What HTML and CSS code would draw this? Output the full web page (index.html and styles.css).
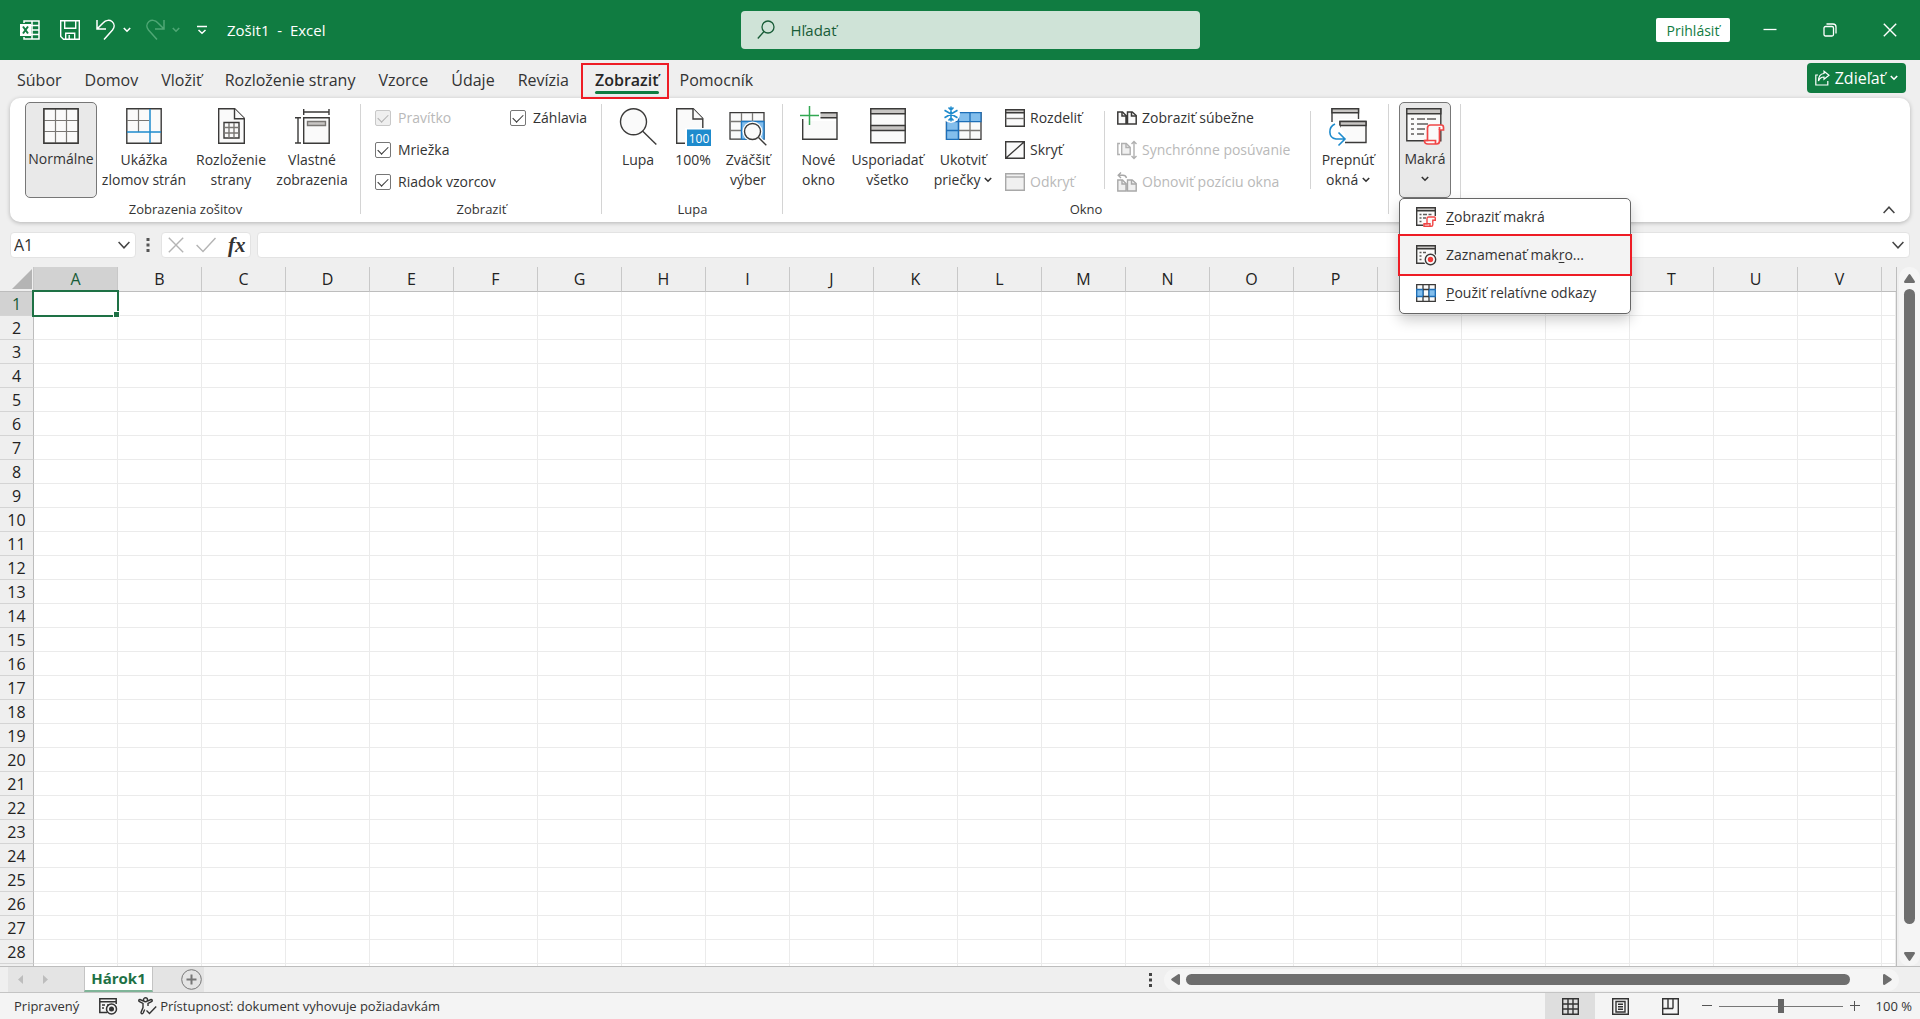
FILE: index.html
```
<!DOCTYPE html>
<html lang="sk">
<head>
    <meta charset="UTF-8">
    <meta name="viewport" content="width=device-width, initial-scale=1.0">
    <title>Zošit1 - Excel</title>
    <link rel="stylesheet" href="styles.css">
</head>
<body>
    <!-- Title bar -->
    <header class="titlebar">
        <div class="title-left">
            <svg class="app-icon" width="20" height="20" viewBox="0 0 20 20" fill="none" stroke="#fff" stroke-width="1.5">
                <path d="M4 3V1h15v18H4v-2M12 1v18M4 5.500h15M12 10h7M4 14.500h15"/>
                <path d="M0 4h11v12H0z" fill="#fff" stroke="none"/>
                <path d="M3 6.500l5 7M8 6.500l-5 7" stroke="#107c41" stroke-width="2"/>
            </svg>
            <button class="icon-btn save" aria-label="Uložiť">
                <svg width="20" height="20" viewBox="0 0 20 20" fill="none" stroke="#fff" stroke-width="1.4"><path d="M.7.7h18.600v18.600H3.500L.7 16.500zM4.700.7v7.600h11V.7M5.700 19.300v-6h9v6M9.200 15v4"/></svg>
            </button>
            <button class="icon-btn undo" aria-label="Späť">
                <svg width="20" height="22" viewBox="0 0 20 22" fill="none" stroke="#fff" stroke-width="1.500"><path d="M1 1v9h9M1.500 9.500L7 4c3-3.500 7-3 9-1.500 3 2.500 2.500 6 .5 8.500L8 20.500"/></svg>
                <svg width="8" height="6" viewBox="0 0 8 6" fill="none" stroke="#fff" stroke-width="1.600"><path d="M.8 1L4 4.200 7.200 1"/></svg>
            </button>
            <button class="icon-btn redo" aria-label="Znova" disabled>
                <svg width="20" height="22" viewBox="0 0 20 22" fill="none" stroke="#4fa775" stroke-width="1.500"><path d="M19 1v9h-9M18.500 9.500L13 4c-3-3.500-7-3-9-1.500-3 2.500-2.500 6-.5 8.500l8.500 9.500"/></svg>
                <svg width="8" height="6" viewBox="0 0 8 6" fill="none" stroke="#4fa775" stroke-width="1.600"><path d="M.8 1L4 4.200 7.200 1"/></svg>
            </button>
            <button class="icon-btn customize" aria-label="Prispôsobiť panel">
                <svg width="10" height="10" viewBox="0 0 10 10" fill="none" stroke="#fff" stroke-width="1.500"><path d="M0 1.500h10M1.500 5L5 8.200 8.500 5"/></svg>
            </button>
            <span class="doc-title">Zošit1&nbsp; -&nbsp; Excel</span>
        </div>
        <label class="search">
            <svg width="18" height="20" viewBox="0 0 18 20" fill="none" stroke="#185c37" stroke-width="1.300"><circle cx="11" cy="7" r="6"/><path d="M7 11.500L.8 18.500"/></svg>
            <input type="text" placeholder="Hľadať" aria-label="Hľadať">
        </label>
        <div class="title-right">
            <button class="signin">Prihlásiť</button>
            <button class="win-btn" aria-label="Minimalizovať">
                <svg width="14" height="14" viewBox="0 0 14 14" stroke="#fff" stroke-width="1.300"><path d="M.5 6.500h13"/></svg>
            </button>
            <button class="win-btn" aria-label="Obnoviť">
                <svg width="14" height="14" viewBox="0 0 14 14" fill="none" stroke="#fff" stroke-width="1.300"><rect x="1" y="3.500" width="9.500" height="9.500" rx="1.500"/><path d="M3.500 1h6.500a3 3 0 0 1 3 3v6.500"/></svg>
            </button>
            <button class="win-btn" aria-label="Zavrieť">
                <svg width="14" height="14" viewBox="0 0 14 14" stroke="#fff" stroke-width="1.400"><path d="M.8.8l12.400 12.400M13.200.8L.8 13.200"/></svg>
            </button>
        </div>
    </header>

    <!-- Tabs -->
    <nav class="tabs">
        <button class="tab">Súbor</button>
        <button class="tab">Domov</button>
        <button class="tab">Vložiť</button>
        <button class="tab">Rozloženie strany</button>
        <button class="tab">Vzorce</button>
        <button class="tab">Údaje</button>
        <button class="tab">Revízia</button>
        <button class="tab active">Zobraziť</button>
        <button class="tab">Pomocník</button>
        <button class="share">
            <svg width="15" height="16" viewBox="0 0 15 16" fill="none" stroke="#fff" stroke-width="1.200"><path d="M3 5H.8v10h12v-4M9 1.200l5 4-5 4V7C6 7 4.500 8.500 3.500 11 3.500 6.500 6 3.800 9 3.500z"/></svg>
            Zdieľať
            <svg width="8" height="6" viewBox="0 0 8 6" fill="none" stroke="#fff" stroke-width="1.600"><path d="M.8 1L4 4.200 7.200 1"/></svg>
        </button>
    </nav>

    <!-- Ribbon -->
    <section class="ribbon">
        <div class="group group-views">
            <div class="group-body">
                <button class="big w-72 pressed">
                    <svg width="36" height="36" viewBox="0 0 36 36" fill="#fafafa" stroke="#797774" stroke-width="1.200"><path d="M1 1h34v34H1z"/><path d="M12.500 1v34M23.500 1v34M1 12.500h34M1 23.500h34"/><path d="M.8.8h34.400v34.400H.8z" fill="none" stroke="#3b3a39" stroke-width="1.400"/></svg>
                    <span>Normálne</span>
                </button>
                <button class="big w-94">
                    <svg width="36" height="36" viewBox="0 0 36 36" fill="#fafafa"><path d="M.8.8h34.400v34.400H.8z" stroke="#3b3a39" stroke-width="1.400"/><path d="M12.500 1v23M1 12.500h22" stroke="#797774" stroke-width="1.200"/><path d="M24 1v34M1 24h34" stroke="#1e8bcd" stroke-width="1.500"/></svg>
                    <span>Ukážka<br>zlomov strán</span>
                </button>
                <button class="big w-80">
                    <svg width="36" height="36" viewBox="0 0 36 36" fill="#fafafa" stroke="#3b3a39" stroke-width="1.400"><path d="M5.700.8h16l9.600 9.600v24.800H5.700z"/><path d="M21.500.8v10h10"/><path d="M11 14.500h15v15.500H11z"/><path d="M16 15v15M21 15v15M11 19.500h15M11 25h15" stroke="#797774"/></svg>
                    <span>Rozloženie<br>strany</span>
                </button>
                <button class="big w-82">
                    <svg width="36" height="36" viewBox="0 0 36 36" fill="#fafafa" stroke="#3b3a39" stroke-width="1.400"><path d="M9.700 9.700h25.500v25.500H9.700z"/><path d="M9.700 1v6M35 1v6M9.700 4h25.300M1 9.700h6M1 35h6M4 9.700V35"/><path d="M13.500 13.500h18v4h-18z" fill="#c8c6c4" stroke="#797774"/></svg>
                    <span>Vlastné<br>zobrazenia</span>
                </button>
            </div>
            <div class="group-label">Zobrazenia zošitov</div>
        </div>

        <div class="group group-show">
            <div class="group-body">
                <div class="checks">
                    <label class="check disabled"><input type="checkbox" checked disabled>Pravítko</label>
                    <label class="check"><input type="checkbox" checked>Mriežka</label>
                    <label class="check"><input type="checkbox" checked>Riadok vzorcov</label>
                </div>
                <div class="checks">
                    <label class="check"><input type="checkbox" checked>Záhlavia</label>
                </div>
            </div>
            <div class="group-label">Zobraziť</div>
        </div>

        <div class="group group-zoom">
            <div class="group-body">
                <button class="big w-56">
                    <svg width="38" height="38" viewBox="0 0 38 38" fill="#fafafa" stroke="#3b3a39" stroke-width="1.400"><circle cx="14.500" cy="13.800" r="13"/><path d="M23.500 23l13.800 13.500"/></svg>
                    <span>Lupa</span>
                </button>
                <button class="big w-54">
                    <svg width="36" height="38" viewBox="0 0 36 38" fill="#fafafa" stroke="#3b3a39" stroke-width="1.400"><path d="M1.700.8h16.500l9.600 9.800v24.600H1.700z"/><path d="M18 .8v10.200h10"/><path d="M10 20h26v18H10z" fill="#fff" stroke="none"/><path d="M12 21.500h24V38H12z" fill="#1e8bcd" stroke="none"/><text x="24" y="34.500" class="badge-text">100</text></svg>
                    <span>100%</span>
                </button>
                <button class="big w-56">
                    <svg width="38" height="38" viewBox="0 0 38 38" fill="#fafafa" stroke="#797774" stroke-width="1.300"><path d="M1 4.700h34v26.500H1z" stroke="#3b3a39"/><path d="M12.500 5v26M23.500 5v26M1 13.500h34M1 22.500h34"/><path d="M12.500 13.500h22.500v17.700H12.500z" fill="#83beec" stroke="#1e78c2"/><circle cx="23.500" cy="23.500" r="10" fill="#fff" stroke="none"/><path d="M30 30l7.500 7.500" stroke="#fff" stroke-width="4"/><circle cx="23.500" cy="23.500" r="8" stroke="#3b3a39" stroke-width="1.400"/><path d="M29.500 29.500l7.800 7.800" stroke="#3b3a39" stroke-width="1.400"/></svg>
                    <span>Zväčšiť<br>výber</span>
                </button>
            </div>
            <div class="group-label">Lupa</div>
        </div>

        <div class="group group-window">
            <div class="group-body">
                <button class="big w-55">
                    <svg width="38" height="36" viewBox="0 0 38 36" fill="none" stroke="#3b3a39" stroke-width="1.400"><path d="M20.500 4.700h16.500v5H20.500z" fill="#c8c6c4" stroke="none"/><path d="M2.700 13h34.500v18.300H2.700z" fill="#fafafa" stroke="none"/><path d="M20.500 4.700h16.500v26.600H2.700V11M20.500 9.700h16.500"/><path d="M9.500-2v19M0 7.500h19" stroke="#32a852" stroke-width="1.500"/></svg>
                    <span>Nové<br>okno</span>
                </button>
                <button class="big w-83">
                    <svg width="36" height="36" viewBox="0 0 36 36" fill="#fafafa" stroke="#3b3a39" stroke-width="1.400"><path d="M.8.8h34.400v34H.8z"/><path d="M.8.8h34.400v5H.8zM.8 17.500h34.400v5H.8z" fill="#c8c6c4"/></svg>
                    <span>Usporiadať<br>všetko</span>
                </button>
                <button class="big w-68">
                    <svg width="38" height="36" viewBox="0 0 38 36" fill="#fafafa" stroke="#797774" stroke-width="1.300"><path d="M2.500 4.700h34.500v26.600H2.500z" stroke="#3b3a39"/><path d="M2.500 13.500h12v17.800h-12zM2.500 4.700h34.500v9H2.500z" fill="#83beec" stroke="#1e6fb8"/><path d="M14.500 5v26M26 5v9M2.500 22.500h12" stroke="#1e6fb8"/><path d="M26 14v17M15 22.500h22"/><circle cx="7" cy="6" r="9" fill="#fff" stroke="none"/><path d="M7-1.500v15M.5 2.300l13 7.500M13.500 2.300l-13 7.500M4.500-.5L7 2 9.500-.5M4.500 12.500L7 10l2.500 2.500" fill="none" stroke="#1e8bcd" stroke-width="1.600"/></svg>
                    <span>Ukotviť<br>priečky <svg class="chev" width="8" height="6" viewBox="0 0 8 6"><path d="M.8 1L4 4.200 7.200 1"/></svg></span>
                </button>
                <div class="list list-split">
                    <button class="small">
                        <svg width="20" height="18" viewBox="0 0 20 18" fill="#fafafa" stroke="#3b3a39" stroke-width="1.400"><path d="M.7.7h18.600v16.600H.7z"/><path d="M.7.7h18.600v3H.7z" fill="#c8c6c4"/><path d="M.7 9.500h18.600" stroke="#797774"/></svg>
                        Rozdeliť
                    </button>
                    <button class="small">
                        <svg width="20" height="18" viewBox="0 0 20 18" fill="#fafafa" stroke="#3b3a39" stroke-width="1.400"><path d="M.7.7h18.600v16.600H.7zM.7 17.300L19.300.7"/></svg>
                        Skryť
                    </button>
                    <button class="small" disabled>
                        <svg width="20" height="18" viewBox="0 0 20 18" fill="#f0f0f0" stroke="#a8a8a8" stroke-width="1.400"><path d="M.7.7h18.600v16.600H.7z"/><path d="M.7 4h18.600"/></svg>
                        Odkryť
                    </button>
                </div>
                <div class="list list-sync">
                    <button class="small">
                        <svg width="20" height="18" viewBox="0 0 20 18" fill="#fafafa" stroke="#3b3a39" stroke-width="1.500"><path d="M.8 3h4.700l3.500 3.500V15H.8zM10.500 3h4.700l4 3.500V15h-8.700z"/><path d="M5 3v4h4M14.500 3v4h4.500" fill="none"/></svg>
                        Zobraziť súbežne
                    </button>
                    <button class="small" disabled>
                        <svg width="20" height="20" viewBox="0 0 20 20" fill="#f0f0f0" stroke="#b0b0b0" stroke-width="1.400"><path d="M3 3.500H.8v11H3" fill="none"/><path d="M4.700 3.500h4.500l4 3.800v7.200H4.700z"/><path d="M9 3.500v4h4" fill="none"/><path d="M17 1.500v17M14.500 4L17 1.500 19.500 4M14.500 16l2.500 2.500 2.500-2.500" fill="none"/></svg>
                        Synchrónne posúvanie
                    </button>
                    <button class="small" disabled>
                        <svg width="20" height="20" viewBox="0 0 20 20" fill="#f0f0f0" stroke="#a8a8a8" stroke-width="1.400"><path d="M.8 8h4.700l3.500 3.500V19H.8zM10.500 8h4.700l4 3.500V19h-8.700z"/><path d="M5 8v4h4M14.500 8v4h4.500M4 .5L1.200 3.200 4 6M1.500 3.200H6c2 0 3 1 3.500 2.800" fill="none"/></svg>
                        Obnoviť pozíciu okna
                    </button>
                </div>
                <button class="big w-74">
                    <svg width="38" height="38" viewBox="0 0 38 38" fill="#fafafa" stroke="#3b3a39" stroke-width="1.400"><path d="M3 .8h26.500v16H3z"/><path d="M3 .8h26.500v4H3z" fill="#c8c6c4"/><path d="M9 11h29v24H9z" fill="#fff" stroke="none"/><path d="M11 13.500h26v21H11z"/><path d="M11 13.500h26v4H11z" fill="#c8c6c4"/><path d="M0 14h8l8 12v12H0z" fill="#fff" stroke="none"/><path d="M6 16c-7 3-7 14 1 15h9M9.500 24.500l6.500 6.500-6.500 6.500" fill="none" stroke="#1e8bcd" stroke-width="1.600"/></svg>
                    <span>Prepnúť<br>okná <svg class="chev" width="8" height="6" viewBox="0 0 8 6"><path d="M.8 1L4 4.200 7.200 1"/></svg></span>
                </button>
            </div>
            <div class="group-label">Okno</div>
        </div>

        <div class="group group-macros">
            <div class="group-body">
                <div class="dropdown">
                    <button class="big w-52 pressed">
                        <svg width="38" height="37" viewBox="0 0 38 37" fill="#fafafa" stroke="#3b3a39" stroke-width="1.400"><path d="M.8.8h34v32H.8z"/><path d="M.8.8h34v5H.8z" fill="#c8c6c4"/><path d="M5 11h3M11 11h8M21 11h9M5 16h3M11 16h11M5 21h3M11 21h8M5 26h3M11 26h7" stroke="#605e5c"/><path d="M22 36c-3 0-3.500-1-3.500-3.500h3V20c0-2.500 1-3 3-3h11c1.500 0 2 1 2 2.500v2.500h-4v11c0 2-1 3-3 3z" stroke="#f04545" stroke-width="1.700"/><path d="M18.500 32.500h11V36M33.500 22v-3" fill="none" stroke="#f04545" stroke-width="1.700"/></svg>
                        <span>Makrá<br><svg class="chev" width="8" height="6" viewBox="0 0 8 6"><path d="M.8 1L4 4.200 7.200 1"/></svg></span>
                    </button>
                    <div class="menu">
                        <button class="menu-item">
                            <svg width="20" height="20" viewBox="0 0 20 20" fill="#fafafa" stroke="#3b3a39" stroke-width="1.400"><path d="M.7.7h18.600v17.600H.7z"/><path d="M.7.7h18.600v3H.7z" fill="#c8c6c4"/><path d="M3.500 7.500h2M7 7.500h4M12.500 7.500h3M3.500 11h2M7 11h3M3.500 14.500h2" stroke="#605e5c"/><path d="M10 9h10v11H7.500v-4H10z" fill="#fff" stroke="none"/><path d="M8 19.300v-2.500h3V11.500c0-1.200.5-1.500 1.500-1.500h6c.6 0 .8.500.8 1.200v2h-2.500v4.500c0 1-.6 1.600-1.600 1.600z" stroke="#f04545"/><path d="M8 16.800h6v2.500" fill="none" stroke="#f04545"/></svg>
                            <span><u>Z</u>obraziť makrá</span>
                        </button>
                        <button class="menu-item highlighted">
                            <svg width="20" height="20" viewBox="0 0 20 20" fill="#fafafa" stroke="#3b3a39" stroke-width="1.400"><path d="M.7.7h18.600v17.600H.7z"/><path d="M.7.7h18.600v3H.7z" fill="#c8c6c4"/><path d="M3.500 7.500h2M7 7.500h3M3.500 11h2M3.500 14.500h2" stroke="#605e5c"/><circle cx="14.500" cy="14.500" r="7" fill="#f3f3f3" stroke="none"/><circle cx="14.500" cy="14.500" r="5.200"/><circle cx="14.500" cy="14.500" r="2.700" fill="#f03a3a" stroke="none"/></svg>
                            <span>Zaznamenať mak<u>r</u>o...</span>
                        </button>
                        <button class="menu-item">
                            <svg width="20" height="18" viewBox="0 0 20 18" fill="#fafafa" stroke="#3b3a39" stroke-width="1.300"><path d="M.7.7h18.600v16.600H.7z"/><path d="M7 1v16M13 1v16"/><path d="M.7 5.500H7v7H.7zM13 5.500h6.300v7H13z" fill="#83beec" stroke="#1e6fb8"/><path d="M7 5.500h6M7 12.500h6"/></svg>
                            <span><u>P</u>oužiť relatívne odkazy</span>
                        </button>
                    </div>
                </div>
            </div>
        </div>
        <button class="collapse" aria-label="Zbaliť pás s nástrojmi">
            <svg width="12" height="8" viewBox="0 0 12 8" fill="none" stroke="#444" stroke-width="1.500"><path d="M.6 7L6 1.200 11.400 7"/></svg>
        </button>
    </section>

    <!-- Formula bar -->
    <div class="formula-bar">
        <div class="name-box">
            <input type="text" value="A1" aria-label="Pole názvov">
            <svg width="12" height="8" viewBox="0 0 12 8" fill="none" stroke="#444" stroke-width="1.500"><path d="M.6 1L6 6.800 11.400 1"/></svg>
        </div>
        <svg class="grip" width="4" height="14" viewBox="0 0 4 14" fill="#555"><path d="M.5 0h3v3h-3zM.5 5.500h3v3h-3zM.5 11h3v3h-3z"/></svg>
        <div class="fx-box">
            <button class="icon-btn" aria-label="Zrušiť" disabled><svg width="16" height="16" viewBox="0 0 16 16" stroke="#b4b4b4" stroke-width="1.400"><path d="M.8.8l14.400 14.400M15.200.8L.8 15.200"/></svg></button>
            <button class="icon-btn" aria-label="Zadať" disabled><svg width="20" height="16" viewBox="0 0 20 16" fill="none" stroke="#b4b4b4" stroke-width="1.400"><path d="M.6 8l6.400 6.500L19.500 1"/></svg></button>
            <button class="icon-btn fx">fx</button>
        </div>
        <div class="formula-input">
            <input type="text" aria-label="Vzorec">
            <svg width="12" height="8" viewBox="0 0 12 8" fill="none" stroke="#444" stroke-width="1.500"><path d="M.6 1L6 6.800 11.400 1"/></svg>
        </div>
    </div>

    <!-- Sheet -->
    <main class="sheet">
        <div class="grid-wrap">
            <table class="grid" id="grid"></table>
        </div>
        <div class="vscroll">
            <svg width="11" height="9" viewBox="0 0 11 9" fill="#6e6e6e"><path d="M4.500.8a1.200 1.200 0 0 1 2 0L11 7.500 10.500 9H.5L0 7.500z"/></svg>
            <div class="vthumb"></div>
            <svg width="11" height="9" viewBox="0 0 11 9" fill="#6e6e6e"><path d="M4.500 8.200a1.200 1.200 0 0 0 2 0L11 1.500 10.500 0H.5L0 1.500z"/></svg>
        </div>
    </main>

    <!-- Sheet tabs -->
    <div class="sheet-bar">
        <div class="sheet-tabs">
            <button class="icon-btn" aria-label="Predchádzajúci hárok" disabled><svg width="5" height="9" viewBox="0 0 5 9" fill="#bdbdbd"><path d="M5 0v9L0 4.500z"/></svg></button>
            <button class="icon-btn" aria-label="Nasledujúci hárok" disabled><svg width="5" height="9" viewBox="0 0 5 9" fill="#bdbdbd"><path d="M0 0v9l5-4.500z"/></svg></button>
            <button class="sheet-tab">Hárok1</button>
            <button class="icon-btn add" aria-label="Nový hárok"><svg width="21" height="21" viewBox="0 0 21 21" fill="none" stroke="#777"><circle cx="10.500" cy="10.500" r="9.800"/><path d="M10.500 5.500v10M5.500 10.500h10" stroke-width="2"/></svg></button>
        </div>
        <svg class="grip-h" width="3" height="14" viewBox="0 0 3 14" fill="#444"><path d="M0 0h3v3H0zM0 5.500h3v3H0zM0 11h3v3H0z"/></svg>
        <div class="hscroll">
            <svg width="9" height="11" viewBox="0 0 9 11" fill="#6e6e6e"><path d="M.8 4.500a1.200 1.200 0 0 0 0 2L7.500 11 9 10.500V.5L7.500 0z"/></svg>
            <div class="hthumb"></div>
            <svg width="9" height="11" viewBox="0 0 9 11" fill="#6e6e6e"><path d="M8.200 4.500a1.200 1.200 0 0 1 0 2L1.500 11 0 10.500V.5L1.500 0z"/></svg>
        </div>
    </div>

    <!-- Status bar -->
    <footer class="status">
        <span class="ready">Pripravený</span>
        <button class="icon-btn record" aria-label="Zaznamenať makro">
            <svg width="18" height="17" viewBox="0 0 18 17" fill="none" stroke="#333" stroke-width="1.500"><path d="M8 14.500H.8V.8h16.400V6M.8 3.800h16.400M3 7h3M3 10h2M8 7h2"/><circle cx="12.500" cy="11" r="5"/><circle cx="12.500" cy="11" r="2.500" fill="#333" stroke="none"/></svg>
        </button>
        <button class="accessibility">
            <svg width="19" height="18" viewBox="0 0 19 18" fill="none" stroke="#333" stroke-width="1.400"><circle cx="7.500" cy="2.800" r="2"/><path d="M5.500 4L2 2.500C.5 2.500.3 4 1.500 4.600L5 6.500v4L3 15.500c0 1.500 1.500 1.700 2.200.5l1.500-3.500M9.500 4L13 2.500c1.500 0 1.700 1.500.5 2.100L10 6.500v2.500M8.500 13.500l3 3 6.700-7"/></svg>
            Prístupnosť: dokument vyhovuje požiadavkám
        </button>
        <div class="views">
            <button class="view active" aria-label="Normálne"><svg width="17" height="17" viewBox="0 0 17 17" fill="none" stroke="#333" stroke-width="1.400"><path d="M.7.7h15.600v15.600H.7zM6 1v15M11 1v15M1 6h15M1 11h15"/></svg></button>
            <button class="view" aria-label="Rozloženie strany"><svg width="17" height="17" viewBox="0 0 17 17" fill="none" stroke="#333" stroke-width="1.400"><path d="M.7.7h15.600v15.600H.7zM4 3.500h9v10.500H4zM6 6.200h5M6 8.700h5M6 11.200h5"/></svg></button>
            <button class="view" aria-label="Ukážka zlomov strán"><svg width="17" height="17" viewBox="0 0 17 17" fill="none" stroke="#333" stroke-width="1.400"><path d="M.7.7h15.600v15.600H.7zM6 1v9.500M11 1v9.500M1 10.500h10"/></svg></button>
        </div>
        <div class="zoom">
            <button class="icon-btn" aria-label="Oddialiť"><svg width="10" height="10" viewBox="0 0 10 10" stroke="#555"><path d="M0 4.500h10"/></svg></button>
            <input type="range" min="0" max="100" value="50" aria-label="Lupa">
            <button class="icon-btn" aria-label="Priblížiť"><svg width="10" height="10" viewBox="0 0 10 10" stroke="#555"><path d="M0 4.500h10M4.500 0v10"/></svg></button>
            <button class="percent">100 %</button>
        </div>
    </footer>

    <script src="script.js"></script>
</body>
</html>
```
FILE: styles.css
```
* {
    box-sizing: border-box;
}

body {
    margin: 0;
    height: 100vh;
    display: flex;
    flex-direction: column;
    overflow: hidden;
    background: #efefef;
    color: #333;
    font-family: "Segoe UI", "Open Sans", "Noto Sans", sans-serif;
    font-size: 14px;
}

button,
input {
    font: inherit;
    color: inherit;
    margin: 0;
    padding: 0;
    border: none;
    background: none;
    outline: none;
}

button {
    white-space: nowrap;
}

svg {
    display: block;
    flex-shrink: 0;
    overflow: visible;
}

.icon-btn {
    display: flex;
    align-items: center;
    gap: 7px;
}

/* Title bar */
.titlebar {
    height: 60px;
    flex-shrink: 0;
    display: grid;
    grid-template-columns: 1fr 479px 1fr;
    align-items: center;
    background: #107c41;
    color: #fff;
}

.title-left {
    display: flex;
    align-items: center;
    padding-left: 20px;
}

.save {
    margin-left: 20px;
}

.undo {
    margin-left: 16px;
}

.redo {
    margin-left: 14px;
}

.customize {
    margin-left: 17px;
}

.doc-title {
    margin-left: 20px;
    font-size: 15px;
}

.search {
    height: 38px;
    margin-left: 20px;
    padding: 0 16px;
    display: flex;
    align-items: center;
    gap: 16px;
    background: #cfe3d7;
    border-radius: 4px;
    color: #185c37;
}

.search input {
    flex: 1;
    font-size: 15px;
}

.search input::placeholder {
    color: #185c37;
    opacity: 1;
}

.title-right {
    display: flex;
    justify-content: flex-end;
    align-items: center;
}

.signin {
    width: 74px;
    height: 24px;
    margin-right: 10px;
    background: #fff;
    border-radius: 2px;
    color: #107c41;
}

.win-btn {
    width: 60px;
    height: 40px;
    display: flex;
    align-items: center;
    justify-content: center;
}

/* Tabs */
.tabs {
    height: 38px;
    flex-shrink: 0;
    display: flex;
    align-items: center;
    padding: 0 14px 0 6px;
    font-size: 16px;
}

.tab {
    position: relative;
    height: 38px;
    padding: 2px 12px 0 11px;
}

.tab.active {
    padding: 2px 10px 0 14px;
    font-weight: 600;
    color: #262626;
}

/* green underline of the open tab */
.tab.active::before {
    content: "";
    position: absolute;
    left: 14px;
    right: 10px;
    bottom: 4px;
    height: 3px;
    border-radius: 2px;
    background: #107c41;
}

.tab.active::after {
    content: "";
    position: absolute;
    left: 0;
    right: 0;
    top: 3px;
    bottom: -1px;
    border: 2px solid #ee1c25;
    z-index: 2;
}

.share {
    width: 99px;
    height: 30px;
    margin-left: auto;
    margin-bottom: 2px;
    display: flex;
    align-items: center;
    justify-content: center;
    gap: 5px;
    background: #107c41;
    border-radius: 4px;
    color: #fff;
}

/* Ribbon */
.ribbon {
    position: relative;
    height: 124px;
    flex-shrink: 0;
    margin: 0 10px;
    display: flex;
    background: #fff;
    border-radius: 10px;
    box-shadow: 0 1px 4px rgba(0, 0, 0, 0.25);
    line-height: 20px;
}

.group {
    position: relative;
    padding-top: 4px;
}

.group::after {
    content: "";
    position: absolute;
    right: 0;
    top: 6px;
    bottom: 8px;
    width: 1px;
    background: #d4d4d4;
}

.group-body {
    height: 96px;
    display: flex;
}

.group-label {
    height: 22px;
    font-size: 13px;
    line-height: 22px;
    text-align: center;
}

.group-views {
    width: 351px;
}

.group-views .group-body {
    padding-left: 15px;
}

.group-show {
    width: 241px;
}

.group-zoom {
    width: 181px;
}

.group-window {
    width: 606px;
}

.group-zoom .group-body,
.group-window .group-body {
    padding-left: 8px;
}

.group-macros {
    width: 72px;
    padding-left: 10px;
}

.big {
    height: 96px;
    padding-top: 6px;
    display: flex;
    flex-direction: column;
    align-items: center;
    line-height: 20px;
}

.big > svg {
    margin-bottom: auto;
}

.big > span {
    height: 48px;
}

.big.pressed {
    background: #e9e9e9;
    border: 1px solid #777;
    border-radius: 5px;
    padding-top: 5px;
}

.w-52 { width: 52px; }
.w-54 { width: 54px; }
.w-55 { width: 55px; }
.w-56 { width: 56px; }
.w-68 { width: 68px; }
.w-72 { width: 72px; }
.w-74 { width: 74px; }
.w-80 { width: 80px; }
.w-82 { width: 82px; }
.w-83 { width: 83px; }
.w-94 { width: 94px; }

.chev {
    display: inline-block;
    vertical-align: 2px;
    fill: none;
    stroke: #333;
    stroke-width: 1.6;
}

.badge-text {
    font-size: 12px;
    fill: #fff;
    stroke: none;
    text-anchor: middle;
}

.checks {
    width: 135px;
    display: flex;
    flex-direction: column;
}

.group-show .checks:first-child {
    margin-left: 14px;
}

.group-show .checks:last-child {
    width: 90px;
}

.check {
    height: 32px;
    display: flex;
    align-items: center;
    gap: 7px;
    white-space: nowrap;
}

.check input {
    appearance: none;
    width: 16px;
    height: 16px;
    flex-shrink: 0;
    border: 1px solid #767676;
    border-radius: 2px;
    display: flex;
    align-items: center;
    justify-content: center;
}

.check input:checked::before {
    content: "";
    width: 9px;
    height: 5px;
    margin-bottom: 3px;
    border-left: 1px solid #333;
    border-bottom: 1px solid #333;
    transform: rotate(-45deg);
}

.check.disabled {
    color: #b9b9b9;
}

.check.disabled input {
    background: #efefef;
    border-color: #c8c8c8;
}

.check.disabled input::before {
    border-color: #b0b0b0;
}

.list {
    position: relative;
    display: flex;
    flex-direction: column;
}

.list-split {
    width: 108px;
    padding-left: 8px;
}

.list-sync {
    width: 206px;
    padding-left: 12px;
}

.list::after {
    content: "";
    position: absolute;
    right: 0;
    top: 9px;
    bottom: 9px;
    width: 1px;
    background: #d4d4d4;
}

.small {
    height: 32px;
    display: flex;
    align-items: center;
    gap: 5px;
}

.small:disabled {
    color: #b9b9b9;
}

.collapse {
    margin: auto 15px 8px auto;
}

/* Macro menu */
.dropdown {
    position: relative;
}

.menu {
    position: absolute;
    left: 0;
    top: 96px;
    width: 232px;
    padding-bottom: 2px;
    background: #fff;
    border: 1px solid #666;
    border-radius: 5px;
    box-shadow: 0 6px 14px rgba(0, 0, 0, 0.2);
    z-index: 5;
}

.menu-item {
    position: relative;
    width: 100%;
    height: 36px;
    padding-left: 16px;
    display: flex;
    align-items: center;
    gap: 10px;
}

.menu-item u {
    text-underline-offset: 2px;
    text-decoration-thickness: 1px;
}

.menu-item.highlighted {
    height: 40px;
    background: #f3f3f3;
}

.menu-item.highlighted::after {
    content: "";
    position: absolute;
    inset: -1px -2px;
    border: 2px solid #ee1c25;
}

/* Formula bar */
.formula-bar {
    height: 26px;
    flex-shrink: 0;
    margin: 10px 10px 9px;
    display: flex;
    align-items: center;
}

.name-box,
.fx-box,
.formula-input {
    height: 26px;
    display: flex;
    align-items: center;
    background: #fff;
    border: 1px solid #e3e3e3;
    border-radius: 4px;
}

.name-box {
    width: 126px;
    padding: 0 5px 0 3px;
}

.name-box input {
    flex: 1;
    min-width: 0;
    font-size: 16px;
}

.grip {
    margin: 0 11px 0 10px;
}

.fx-box {
    width: 90px;
    padding-left: 6px;
    gap: 12px;
}

.fx {
    font-family: "Liberation Serif", serif;
    font-size: 21px;
    font-style: italic;
    font-weight: bold;
    line-height: 22px;
}

.formula-input {
    flex: 1;
    margin-left: 6px;
    padding: 0 5px;
}

.formula-input input {
    flex: 1;
}

/* Sheet */
.sheet {
    flex: 1;
    min-height: 0;
    display: flex;
}

.grid-wrap {
    flex: 1;
    overflow: hidden;
    border-right: 1px solid #bdbdbd;
}

.grid {
    width: 100%;
    table-layout: fixed;
    border-collapse: separate;
    border-spacing: 0;
    background: #fff;
}

.grid th,
.grid td {
    height: 24px;
    padding: 0;
    border-right: 1px solid #ebebeb;
    border-bottom: 1px solid #ebebeb;
}

.grid th {
    background: #efefef;
    color: #222;
    font-size: 16px;
    font-weight: normal;
    line-height: 20px;
}

.grid thead th {
    width: 84px;
    height: 25px;
    border-right-color: #c8c8c8;
    border-bottom-color: #bdbdbd;
}

.grid tbody th {
    border-right-color: #bdbdbd;
    border-bottom-color: #d4d4d4;
}

.grid thead .corner {
    width: 34px;
}

.grid thead .rest {
    width: auto;
    border-right: none;
}

.corner svg {
    margin: 0 1px 0 auto;
}

.grid th.selected {
    background: #d2d2d2;
    color: #185c37;
}

.grid td.active {
    position: relative;
}

/* selection frame and its fill handle */
.grid td.active::before {
    content: "";
    position: absolute;
    inset: -2px;
    border: 2px solid #1e7145;
}

.grid td.active::after {
    content: "";
    position: absolute;
    right: -2px;
    bottom: -2px;
    width: 5px;
    height: 5px;
    background: #1e7145;
    outline: 1px solid #fff;
}

.vscroll {
    width: 21px;
    margin: 0 0 0 2px;
    padding: 7px 0 5px;
    display: flex;
    flex-direction: column;
    align-items: center;
    background: #f5f5f5;
    border-radius: 10px;
}

.vthumb {
    width: 11px;
    flex: 1;
    margin: 6px 0 28px;
    background: #6e6e6e;
    border-radius: 6px;
}

/* Sheet tabs */
.sheet-bar {
    height: 26px;
    flex-shrink: 0;
    display: flex;
    align-items: center;
    padding: 0 21px 0 8px;
    border-top: 1px solid #bdbdbd;
}

.sheet-tabs {
    width: 196px;
    height: 25px;
    display: flex;
    align-items: center;
    gap: 20px;
    padding-left: 10px;
    background: #e4e4e4;
}

.sheet-tab {
    width: 69px;
    height: 25px;
    margin-left: 16px;
    margin-top: -1px;
    background: #fff;
    border: 1px solid #c4c4c4;
    border-top: none;
    border-bottom: 2px solid #7fb498;
    color: #1e7145;
    font-size: 15px;
    font-weight: bold;
    line-height: 20px;
}

.add {
    margin-left: 8px;
}

.grip-h {
    margin-left: auto;
}

.hscroll {
    width: 735px;
    height: 22px;
    margin-left: 12px;
    padding: 0 7px;
    display: flex;
    align-items: center;
    background: #f5f5f5;
    border-radius: 11px;
}

.hthumb {
    flex: 1;
    height: 11px;
    margin: 0 33px 0 6px;
    background: #6e6e6e;
    border-radius: 6px;
}

/* Status bar */
.status {
    height: 27px;
    flex-shrink: 0;
    display: flex;
    align-items: center;
    padding: 0 8px 0 14px;
    background: #f4f4f4;
    border-top: 1px solid #c4c4c4;
    font-size: 13px;
}

.record {
    margin-left: 20px;
}

.accessibility {
    margin-left: 21px;
    display: flex;
    align-items: center;
    gap: 3px;
}

.views {
    height: 26px;
    margin-left: auto;
    display: flex;
}

.view {
    width: 50px;
    display: flex;
    align-items: center;
    justify-content: center;
}

.view.active {
    background: #dedede;
}

.zoom {
    display: flex;
    align-items: center;
    gap: 7px;
    margin-left: 7px;
}

.zoom input {
    appearance: none;
    width: 124px;
    height: 14px;
    background: linear-gradient(#777, #777) center / 100% 1px no-repeat;
}

.zoom input::-webkit-slider-thumb {
    appearance: none;
    width: 6px;
    height: 14px;
    background: #666;
}

.percent {
    width: 37px;
    margin-left: 8px;
    text-align: right;
}
```
FILE: script.js
```
const columns = "ABCDEFGHIJKLMNOPQRSTUV".split("");
const rowCount = 29;
const grid = document.getElementById("grid");

let html = '<thead><tr><th class="corner"><svg width="20" height="20" viewBox="0 0 20 20" fill="#b4b4b4"><path d="M20 0v20H0z"/></svg></th>';
columns.forEach((name, index) => {
    html += `<th scope="col"${index === 0 ? ' class="selected"' : ""}>${name}</th>`;
});
html += '<th class="rest"></th></tr></thead><tbody>';

for (let row = 1; row <= rowCount; row++) {
    const label = row < rowCount ? row : "";
    html += `<tr><th scope="row"${row === 1 ? ' class="selected"' : ""}>${label}</th>`;
    for (let col = 0; col <= columns.length; col++) {
        html += row === 1 && col === 0 ? '<td class="active"></td>' : "<td></td>";
    }
    html += "</tr>";
}

grid.innerHTML = html + "</tbody>";
```
